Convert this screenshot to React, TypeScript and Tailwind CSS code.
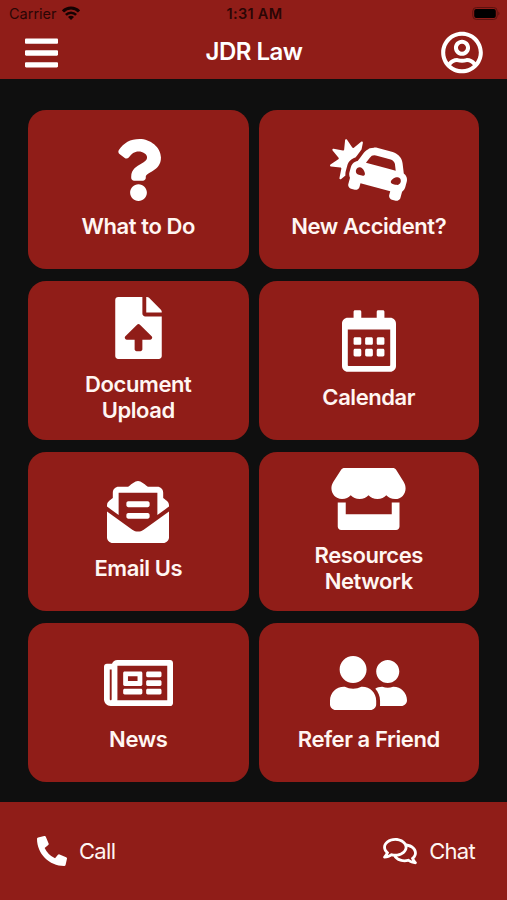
import type { ReactNode } from "react";
import {
  FaBars,
  FaCarCrash,
  FaEnvelopeOpenText,
  FaFileUpload,
  FaPhoneAlt,
  FaQuestion,
  FaRegCalendarAlt,
  FaRegComments,
  FaRegNewspaper,
  FaRegUserCircle,
  FaUserFriends
} from "react-icons/fa";

type Tile = {
  lines: string[];
  icon: ReactNode;
};

function StoreIcon() {
  return (
    <svg viewBox="0 0 616 512" fill="currentColor" className="h-[62px] w-[75px]" aria-hidden>
      <path d="M112 0H508c12 0 22 5 28 15l62 98c40 65 2 143-70 143-31 0-56-12-73-31-17 19-42 31-73 31s-57-12-74-31c-17 19-42 31-73 31s-56-12-74-31c-16 19-41 31-72 31C16 256-22 178 18 113L82 15C88 5 98 0 112 0Z" />
      <path d="M54 284h66v98h380v-98h64v200c0 16-12 28-28 28H82c-16 0-28-12-28-28Z" />
    </svg>
  );
}

const TILES: Tile[] = [
  { lines: ["What to Do"], icon: <FaQuestion className="h-[62px] w-[47px]" /> },
  { lines: ["New Accident?"], icon: <FaCarCrash className="h-[62px] w-[77px]" /> },
  { lines: ["Document", "Upload"], icon: <FaFileUpload className="h-[62px] w-[47px]" /> },
  { lines: ["Calendar"], icon: <FaRegCalendarAlt className="h-[62px] w-[54px]" /> },
  { lines: ["Email Us"], icon: <FaEnvelopeOpenText className="h-[62px] w-[62px]" /> },
  { lines: ["Resources", "Network"], icon: <StoreIcon /> },
  { lines: ["News"], icon: <FaRegNewspaper className="h-[62px] w-[69px]" /> },
  { lines: ["Refer a Friend"], icon: <FaUserFriends className="h-[62px] w-[77px]" /> }
];

function StatusBar() {
  return (
    <div className="grid h-[28px] grid-cols-3 items-center pl-[9px] pr-[7px] text-[14.5px] leading-none text-[#2a0605]">
      <div className="flex items-center gap-[5px]">
        <span>Carrier</span>
        <svg viewBox="0 0 18 14" className="h-[14px] w-[18px] -translate-y-px text-[#140202]" fill="none" stroke="currentColor" aria-hidden>
          <path d="M1 5.4a11.4 11.4 0 0 1 16 0" strokeWidth="3" />
          <path d="M3.9 8.9a7.2 7.2 0 0 1 10.2 0" strokeWidth="2.6" />
          <path d="M9 14 6 11a4.2 4.2 0 0 1 6 0Z" fill="currentColor" stroke="none" />
        </svg>
      </div>
      <span className="text-center font-semibold tracking-[0.3px]">1:31 AM</span>
      <svg viewBox="0 0 28 14" className="h-[14px] w-[28px] justify-self-end" aria-hidden>
        <rect x="0.8" y="0.5" width="24.4" height="12" rx="3.6" fill="none" stroke="#5c120f" />
        <rect x="2.2" y="2" width="21.6" height="9" rx="2" fill="#000" />
        <path d="M26.4 4.5v4c1.4-.5 1.4-3.5 0-4Z" fill="#5c120f" />
      </svg>
    </div>
  );
}

export default function App() {
  return (
    <div className="flex h-[900px] w-[507px] flex-col bg-[#0f0f0f] font-['Inter',sans-serif] text-white">
      <header className="h-[79px] bg-[#901d18]">
        <StatusBar />
        <div className="grid h-[49px] grid-cols-3 items-center pl-[25px] pr-6">
          <button type="button" aria-label="Menu">
            <FaBars className="h-[38px] w-[33px]" />
          </button>
          <h1 className="pb-[2px] text-center text-[24px] font-[560] leading-none tracking-[-0.5px]">JDR Law</h1>
          <button type="button" aria-label="Account" className="justify-self-end">
            <FaRegUserCircle className="h-[43px] w-[42px]" />
          </button>
        </div>
      </header>

      <main className="grid flex-1 grid-cols-2 grid-rows-4 gap-x-[10px] gap-y-3 px-7 pt-[31px] pb-5">
        {TILES.map((tile) => (
          <button
            key={tile.lines[0]}
            type="button"
            className="flex flex-col items-center justify-center gap-3 rounded-[18px] bg-[#901d18] pb-[2px]"
          >
            {tile.icon}
            <span className="flex flex-col text-[22px] font-[560] leading-[26px] tracking-[-0.42px] text-[#fff6f2]">
              {tile.lines.map((line) => (
                <span key={line}>{line}</span>
              ))}
            </span>
          </button>
        ))}
      </main>

      <footer className="flex h-[98px] items-center justify-between bg-[#901d18] pl-[37px] pr-8 text-[22px] tracking-[-0.7px] text-[#fff6f2]">
        <button type="button" className="flex items-center gap-3">
          <FaPhoneAlt className="h-[30px] w-[30px] text-white" />
          <span>Call</span>
        </button>
        <button type="button" className="flex items-center gap-3">
          <FaRegComments className="h-[30px] w-[34px] text-white" />
          <span>Chat</span>
        </button>
      </footer>
    </div>
  );
}
